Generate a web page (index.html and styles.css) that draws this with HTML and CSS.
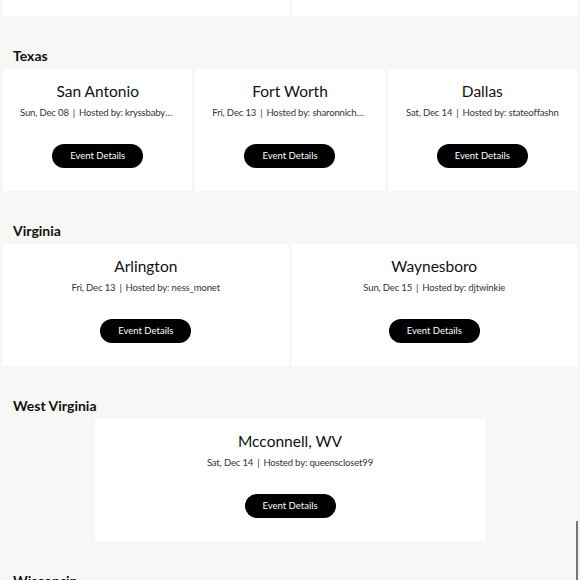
FILE: index.html
```html
<!DOCTYPE html>
<html lang="en">
<head>
<meta charset="utf-8">
<title>Events by State</title>
<link rel="stylesheet" href="styles.css">
</head>
<body>
<main class="page">
  <section class="state state-prev">
    <div class="grid grid-2">
      <div class="card card-tail"></div>
      <div class="card card-tail"></div>
    </div>
  </section>

  <section class="state">
    <h2 class="state-name">Texas</h2>
    <div class="grid grid-3">
      <article class="card">
        <h3 class="city">San Antonio</h3>
        <p class="meta">Sun, Dec 08<span class="sep">|</span>Hosted by: kryssbabyy_closet</p>
        <a class="btn" href="#">Event Details</a>
      </article>
      <article class="card">
        <h3 class="city">Fort Worth</h3>
        <p class="meta">Fri, Dec 13<span class="sep">|</span>Hosted by: sharonnicholes</p>
        <a class="btn" href="#">Event Details</a>
      </article>
      <article class="card">
        <h3 class="city">Dallas</h3>
        <p class="meta">Sat, Dec 14<span class="sep">|</span>Hosted by: stateoffashn</p>
        <a class="btn" href="#">Event Details</a>
      </article>
    </div>
  </section>

  <section class="state">
    <h2 class="state-name">Virginia</h2>
    <div class="grid grid-2">
      <article class="card">
        <h3 class="city">Arlington</h3>
        <p class="meta">Fri, Dec 13<span class="sep">|</span>Hosted by: ness_monet</p>
        <a class="btn" href="#">Event Details</a>
      </article>
      <article class="card">
        <h3 class="city">Waynesboro</h3>
        <p class="meta">Sun, Dec 15<span class="sep">|</span>Hosted by: djtwinkie</p>
        <a class="btn" href="#">Event Details</a>
      </article>
    </div>
  </section>

  <section class="state">
    <h2 class="state-name">West Virginia</h2>
    <div class="grid grid-1">
      <article class="card">
        <h3 class="city">Mcconnell, WV</h3>
        <p class="meta">Sat, Dec 14<span class="sep">|</span>Hosted by: queenscloset99</p>
        <a class="btn" href="#">Event Details</a>
      </article>
    </div>
  </section>

  <section class="state">
    <h2 class="state-name">Wisconsin</h2>
  </section>
</main>
<div class="scroll-thumb"></div>
</body>
</html>
```

FILE: styles.css
```css
html, body {
  margin: 0;
  padding: 0;
  height: 100%;
  overflow: hidden;
}

body {
  background: #f7f7f6;
  font-family: Lato, "Open Sans", sans-serif;
  color: #111;
}

.page {
  padding: 0 3px;
}

.state {
  padding-top: 31px;
}

.state-prev {
  padding-top: 0;
}

.state-name {
  margin: 0 0 4px 10px;
  font-size: 14px;
  font-weight: 700;
  line-height: 18px;
  color: #111;
}

.grid {
  display: grid;
  gap: 3px;
}

.grid-1 {
  grid-template-columns: 390px;
  justify-content: center;
}

.grid-2 {
  grid-template-columns: 1fr 1fr;
}

.grid-3 {
  grid-template-columns: 1fr 1fr 1fr;
}

.card {
  background: #fff;
  display: flex;
  flex-direction: column;
  align-items: center;
  padding: 12px 17px 23px;
  min-width: 0;
}

.card-tail {
  height: 16px;
  padding: 0;
}

.city {
  margin: 0;
  font-size: 15.5px;
  font-weight: 400;
  line-height: 20px;
  color: #111;
}

.meta {
  margin: 5px 0 0;
  max-width: 100%;
  font-size: 9.5px;
  letter-spacing: -0.15px;
  line-height: 14px;
  color: #333;
  white-space: nowrap;
  overflow: hidden;
  text-overflow: ellipsis;
}

.sep {
  margin: 0 4px;
}

.btn {
  margin-top: 24px;
  width: 91px;
  height: 24px;
  border-radius: 12px;
  background: #000;
  color: #fff;
  font-size: 9.5px;
  line-height: 24px;
  text-align: center;
  text-decoration: none;
}

.scroll-thumb {
  position: fixed;
  right: 2px;
  top: 521px;
  width: 2px;
  height: 60px;
  background: #777;
}
```
